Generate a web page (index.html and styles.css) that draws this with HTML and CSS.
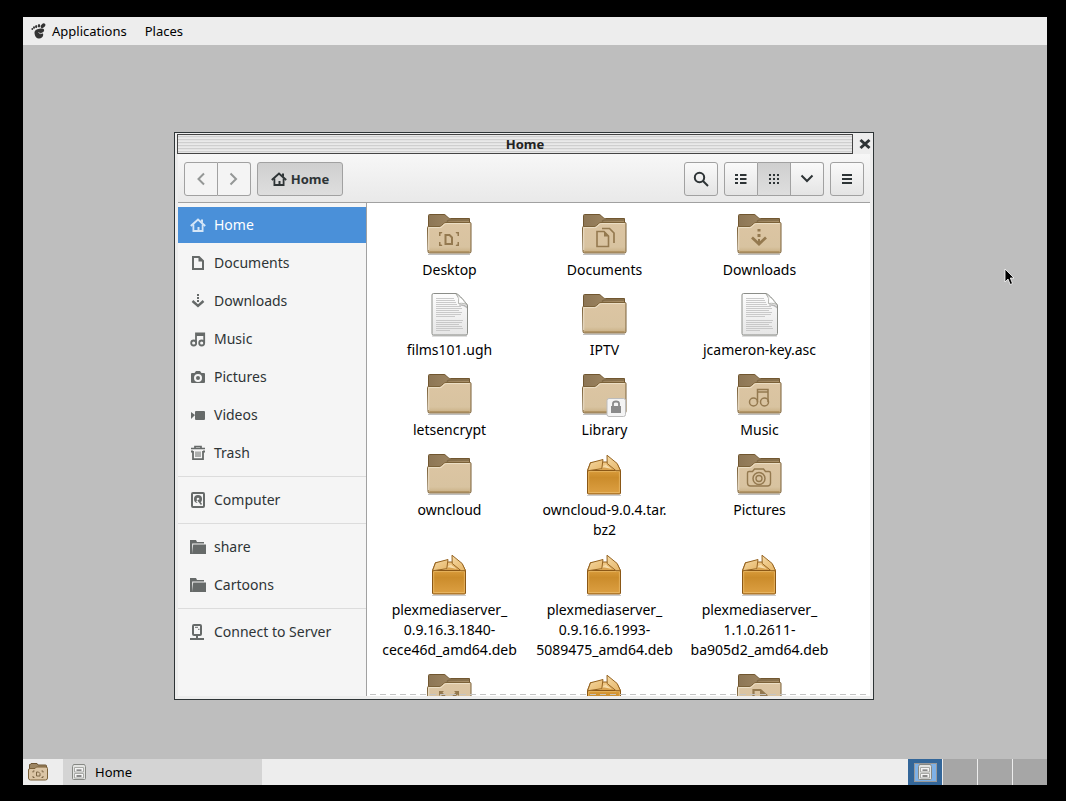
FILE: index.html
```
<!DOCTYPE html>
<html lang="en">
<head>
  <meta charset="UTF-8"/>
  <meta name="viewport" content="width=device-width, initial-scale=1"/>
  <title>Home</title>
  <link rel="stylesheet" href="styles.css">
</head>
<body>
  <svg class="defs" aria-hidden="true">
    <defs>
      <linearGradient id="tan" x1="0" y1="0" x2="0" y2="1"><stop offset="0" stop-color="#dcc5a3"/><stop offset=".8" stop-color="#d8c3a0"/><stop offset="1" stop-color="#c8ae82"/></linearGradient>
      <linearGradient id="brown" x1="0" y1="0" x2="1" y2="0"><stop offset="0" stop-color="#8d7655"/><stop offset="1" stop-color="#a88f69"/></linearGradient>
      <linearGradient id="paper" x1="0" y1="0" x2="0" y2="1"><stop offset="0" stop-color="#fdfdfd"/><stop offset="1" stop-color="#e6e6e6"/></linearGradient>
      <linearGradient id="boxfront" x1="0" y1="0" x2="0" y2="1"><stop offset="0" stop-color="#d89b3a"/><stop offset=".3" stop-color="#cb8c2b"/><stop offset="1" stop-color="#dda043"/></linearGradient>
      <linearGradient id="flap" x1="0" y1="0" x2="1" y2="1"><stop offset="0" stop-color="#f5d9a5"/><stop offset="1" stop-color="#e6b566"/></linearGradient>
    </defs>
    <symbol id="folder" viewBox="0 0 48 48">
      <path d="M3 44.5h42" stroke="#000" stroke-opacity=".25"/>
      <path d="M3.500 18V5.500q0-1 1-1h14.500q1 0 1.800.8l2.700 2.700q.8.500 1.800.5h19.200v12z" fill="url(#brown)" stroke="#715730"/>
      <path d="M22 11.500q1-1.500 3-1.500h19" fill="none" stroke="#7f6845" stroke-width="1.500"/>
      <path d="M2.500 17.500q0-1 1-1h10.500q1.500 0 2.500-1l2-2q1-1 2.500-1h24q1 0 1 1v28q0 1.500-1.500 1.500H4.500q-1.500 0-1.500-1.500z" fill="url(#tan)" stroke="#7b6138"/>
      <path d="M3.700 40V17.600h11q1.500 0 2.500-1l2-2q1-1 2.300-1h23.200" fill="none" stroke="#ede0c9"/>
      <path d="M4.500 41.700h40" stroke="#ae915f"/>
    </symbol>
    <symbol id="text-file" viewBox="0 0 48 48">
      <path d="M7 46h35" stroke="#000" stroke-opacity=".25"/>
      <path d="M8.500 3.500h22.500q3 .5 11.500 11.500v28.500q0 1.500-1.500 1.500H8.500q-1.500 0-1.500-1.500V5q0-1.500 1.500-1.500z" fill="url(#paper)" stroke="#8b8d88"/>
      <path d="M11 8.500h18M11 10.500h19M11 12.500h20M11 14.500h21M11 16.500h25M11 18.500h26M11 20.500h23M11 22.500h26M11 24.500h25M11 26.500h19M11 30.500h27M11 32.500h26M11 34.500h23M11 36.500h26M11 38.500h27M11 40.500h14" stroke="#c4c4c4" stroke-width=".9"/>
      <path d="M34 14.500q5-1 8 2l-.2 2q-2-3-7.800-3z" fill="#777" opacity=".5"/>
      <path d="M31 4q4 4 2.500 9.500Q40 12.500 42.200 15.500 38 8 31 4z" fill="#fff" stroke="#a4a6a1" stroke-width=".8"/>
    </symbol>
    <symbol id="package" viewBox="0 0 48 48">
      <path d="M7 45.500h34" stroke="#000" stroke-opacity=".2"/>
      <path d="M7.500 20.500l3-8L22 12h6l9 2 3.500 6.500z" fill="#efc683" stroke="#966421"/>
      <path d="M20 20.500l7-6 8 6z" fill="#d9a24f"/><path d="M22 17l4-2.500 6 4.500-5-1z" fill="#f6dba8"/>
      <path d="M7.500 20.500h33v22.500q0 1-1 1h-31q-1 0-1-1z" fill="url(#boxfront)" stroke="#8a5716"/>
      <path d="M8.700 42.500V21.600h30.700v20.900z" fill="none" stroke="#edbd6e" stroke-opacity=".7"/>
      <path d="M7.500 20.800l3-8L23 9.500l-1.200 9.200z" fill="url(#flap)" stroke="#966421"/>
      <path d="M27 5.200l10.200 8.300 3.300 7.200H36l-8.800-7.200z" fill="url(#flap)" stroke="#966421"/>
    </symbol>
    <symbol id="cabinet" viewBox="0 0 16 16">
      <path d="M2.500.5h11l1 2v12q0 1-1 1h-11q-1 0-1-1v-12z" fill="#e3e4e2" stroke="#868884"/>
      <path d="M3.500 3.500h9v4.500h-9zM3.500 9.500h9V14h-9z" fill="#f5f5f5" stroke="#a9aaa7"/>
      <path d="M5.500 6.200h5M5.500 12h5" stroke="#666" stroke-width="1.300"/>
    </symbol>
    <symbol id="e-desktop" viewBox="0 0 48 48">
      <path d="M14 22h3.500l-1 1.500H15.500V26H14zM14 36h3.500l-1-1.500H15.500V32H14zM34 22h-3.500l1 1.500h1V26H34zM34 36h-3.500l1-1.500h1V32H34z" stroke="none"/>
      <path d="M20.500 25h4l2.500 2.500v6.500h-6.500z" fill="none" stroke-width="2"/>
    </symbol>
    <symbol id="e-documents" viewBox="0 0 48 48">
      <path d="M17 21.500h7l4.500 4.500v10.500H17z" fill="none" stroke-width="1.600"/><path d="M24 21v5.500h5z" stroke="none"/>
      <path d="M22 18.500h7.500l4.500 4.500v10" fill="none" stroke-width="1.700"/>
    </symbol>
    <symbol id="e-downloads" viewBox="0 0 48 48">
      <path d="M22.500 19h3v2.500h-3zM22.500 24h3v3h-3z" stroke="none"/>
      <path d="M17 27.500l7 6.500 7-6.500" fill="none" stroke-width="2.800"/><path d="M24 29v4" stroke-width="2" fill="none"/>
    </symbol>
    <symbol id="e-music" viewBox="0 0 48 48">
      <path d="M22.500 32V19.500h10.500V32M22.500 22h10.500" fill="none" stroke-width="1.500"/><circle cx="18.500" cy="32" r="4" fill="none" stroke-width="1.500"/><circle cx="29.500" cy="32" r="4" fill="none" stroke-width="1.500"/>
    </symbol>
    <symbol id="e-pictures" viewBox="0 0 48 48">
      <path d="M12.500 23q0-1.500 1.500-1.500h3.500l2-2.500h9l2 2.500H34q1.500 0 1.500 1.500v10q0 3-3 3h-17q-3 0-3-3z" fill="none" stroke-width="1.400"/><circle cx="24" cy="28.500" r="6" fill="none" stroke-width="1.500"/><circle cx="24" cy="28.500" r="3" fill="none" stroke-width="1.400"/>
    </symbol>
    <symbol id="e-public" viewBox="0 0 48 48">
      <path d="M14 21h5l-1.500 1.500 3 3-2 2-3-3L14 26zM34 21h-5l1.500 1.500-3 3 2 2 3-3L34 26z" stroke="none"/>
    </symbol>
    <symbol id="e-templates" viewBox="0 0 48 48">
      <path d="M18.500 36V20h7l6 5.500V36z" fill="none" stroke-width="2.200"/><path d="M25 20v6h7z" stroke="none"/>
    </symbol>
    <symbol id="home" viewBox="0 0 16 16">
      <path d="M.8 9L8 2.500 15.200 9" fill="none" stroke="currentColor" stroke-width="2"/>
      <path d="M3.400 7.500V14h9.200V7.500" fill="none" stroke="currentColor" stroke-width="1.800"/><path d="M11 2.500h2V6l-2-1.500z"/><path d="M7.500 14.500V10h2v4.500z"/>
    </symbol>
    <symbol id="document" viewBox="0 0 16 16">
      <path d="M3 2h6l4 4v8H3z" fill="none" stroke="currentColor" stroke-width="2"/><path d="M8.500 1.500v5h5z"/>
    </symbol>
    <symbol id="download" viewBox="0 0 16 16">
      <path d="M7 1h2v2H7zM7 4h2v2H7zM7 7h2v2H7z"/><path d="M2.500 8L8 13l5.500-5" fill="none" stroke="currentColor" stroke-width="2.400"/>
    </symbol>
    <symbol id="music" viewBox="0 0 16 16">
      <path d="M6 12V2.500h8.200V12M6 4h8" fill="none" stroke="currentColor" stroke-width="1.800"/><circle cx="3.700" cy="12" r="2.500" fill="none" stroke="currentColor" stroke-width="1.800"/><circle cx="11.700" cy="12" r="2.500" fill="none" stroke="currentColor" stroke-width="1.800"/>
    </symbol>
    <symbol id="camera" viewBox="0 0 16 16">
      <path fill-rule="evenodd" d="M2 4h2.500L6 2h4l1.500 2H14q1 0 1 1v8q0 1-1 1H2q-1 0-1-1V5q0-1 1-1zm6 1a4 4 0 1 0 0 8 4 4 0 0 0 0-8zm0 2a2 2 0 1 1 0 4 2 2 0 0 1 0-4z"/>
    </symbol>
    <symbol id="video" viewBox="0 0 16 16">
      <path d="M1 5l4 3-4 4zM6 4h8q1 0 1 1v7q0 1-1 1H6q-1 0-1-1V5q0-1 1-1z"/>
    </symbol>
    <symbol id="trash" viewBox="0 0 16 16">
      <path d="M1 3.500h14M5 3V1.500h6V3" fill="none" stroke="currentColor" stroke-width="1.700"/><path d="M3 6v8.200h10V6M1 6.500h2M13 6.500h2" fill="none" stroke="currentColor" stroke-width="1.800"/><path d="M6 6.500V12M8 6.500V12M10 6.500V12" stroke="currentColor" stroke-width="1"/>
    </symbol>
    <symbol id="disk" viewBox="0 0 16 16">
      <rect x="2" y="1" width="12" height="14" rx="1" fill="none" stroke="currentColor" stroke-width="2"/><circle cx="8" cy="7" r="4"/><circle cx="8" cy="7" r="1.300" fill="#f5f5f5"/><path d="M7 8.500l4 4.500" stroke="#f5f5f5" stroke-width="2.500"/><path d="M8 8l3.500 4.500" stroke="currentColor" stroke-width="1.500"/>
    </symbol>
    <symbol id="dir" viewBox="0 0 16 16">
      <path d="M0 1h6l1 2h7v1.500H2.200V15H0z"/><path d="M3.200 5.500H16V15H2z"/>
    </symbol>
    <symbol id="server" viewBox="0 0 16 16">
      <rect x="3" y="1" width="8" height="10" rx="1" fill="none" stroke="currentColor" stroke-width="2"/><path d="M5 3.300h3M8 5.300h1.500" stroke="currentColor"/><path d="M6 11h2v3H6zM0 14h14v2H0z"/>
    </symbol>
  </svg>

  <header class="panel top-panel">
    <button class="menu"><svg class="foot" viewBox="0 0 16 16" aria-hidden="true">
      <path d="M9.500 5.500c3.500-.6 4.500 1.500 3 3.300-1 1.200-2.500 1-3.500.8 2 .5 3.500.5 3.200 2.500-.3 2.300-2.300 3.700-4.700 3.400C4.500 15 3.500 11.800 3.500 9.500c0-2.500 3-3.600 6-4z"/>
      <path d="M7.500 9.500q1.500 1.800 4 .8" fill="none" stroke="#ededed" stroke-width=".8"/>
      <ellipse cx="11.800" cy="2.700" rx="2.700" ry="1.800" transform="rotate(-45 12 2.500)"/><ellipse cx="8" cy="2.700" rx="1.200" ry="1.700"/><ellipse cx="5.200" cy="3.500" rx="1.100" ry="1.500"/><ellipse cx="3" cy="4.500" rx="1" ry="1.200"/><ellipse cx="1.300" cy="6" rx=".9" ry="1"/>
    </svg>Applications</button>
    <button class="menu">Places</button>
  </header>

  <main class="desktop">
    <section class="window" aria-label="Home">
      <div class="titlebar">
        <h1 class="title">Home</h1>
        <button class="close" aria-label="Close"><svg viewBox="0 0 12 12"><path d="M1.500 2l9 8M10.500 2l-9 8" stroke="#2e3436" stroke-width="3"/></svg></button>
      </div>
      <div class="toolbar">
        <div class="group">
          <button class="btn dim" aria-label="Back"><svg viewBox="0 0 16 16"><path d="M11 2.500L5.500 8l5.500 5.500"/></svg></button>
          <button class="btn dim" aria-label="Forward"><svg viewBox="0 0 16 16"><path d="M4.500 2.500L10 8l-5.500 5.500"/></svg></button>
        </div>
        <button class="btn path"><svg class="icon"><use href="#home"/></svg>Home</button>
        <div class="spacer"></div>
        <button class="btn" aria-label="Search"><svg viewBox="0 0 16 16"><circle cx="6.500" cy="6.500" r="4.700"/><path d="M10 10l5 5"/></svg></button>
        <div class="group">
          <button class="btn" aria-label="List view"><svg viewBox="0 0 16 16"><path d="M2 4h3M7 4h6.500M2 8h3M7 8h6.500M2 12h3M7 12h6.500"/></svg></button>
          <button class="btn active" aria-label="Icon view"><svg viewBox="0 0 16 16"><path d="M3 4h2M7 4h2M11 4h2M3 8h2M7 8h2M11 8h2M3 12h2M7 12h2M11 12h2"/></svg></button>
          <button class="btn" aria-label="View options"><svg viewBox="0 0 16 16"><path d="M2.500 4.500L8 10 13.500 4.500"/></svg></button>
        </div>
        <button class="btn" aria-label="Menu"><svg viewBox="0 0 16 16"><path d="M3 4h10M3 8h10M3 12h10"/></svg></button>
      </div>
      <div class="content">
        <nav class="sidebar">
          <a class="place selected" href="#"><svg class="icon"><use href="#home"/></svg>Home</a>
          <a class="place" href="#"><svg class="icon"><use href="#document"/></svg>Documents</a>
          <a class="place" href="#"><svg class="icon"><use href="#download"/></svg>Downloads</a>
          <a class="place" href="#"><svg class="icon"><use href="#music"/></svg>Music</a>
          <a class="place" href="#"><svg class="icon"><use href="#camera"/></svg>Pictures</a>
          <a class="place" href="#"><svg class="icon"><use href="#video"/></svg>Videos</a>
          <a class="place" href="#"><svg class="icon"><use href="#trash"/></svg>Trash</a>
          <hr>
          <a class="place" href="#"><svg class="icon"><use href="#disk"/></svg>Computer</a>
          <hr>
          <a class="place" href="#"><svg class="icon"><use href="#dir"/></svg>share</a>
          <a class="place" href="#"><svg class="icon"><use href="#dir"/></svg>Cartoons</a>
          <hr>
          <a class="place" href="#"><svg class="icon"><use href="#server"/></svg>Connect to Server</a>
        </nav>
        <div class="files">
          <a class="file" href="#"><svg><use href="#folder"/><use class="emblem" href="#e-desktop"/></svg>Desktop</a>
          <a class="file" href="#"><svg><use href="#folder"/><use class="emblem" href="#e-documents"/></svg>Documents</a>
          <a class="file" href="#"><svg><use href="#folder"/><use class="emblem" href="#e-downloads"/></svg>Downloads</a>
          <a class="file" href="#"><svg><use href="#text-file"/></svg>films101.ugh</a>
          <a class="file" href="#"><svg><use href="#folder"/></svg>IPTV</a>
          <a class="file" href="#"><svg><use href="#text-file"/></svg>jcameron-key.asc</a>
          <a class="file" href="#"><svg><use href="#folder"/></svg>letsencrypt</a>
          <a class="file" href="#"><svg viewBox="0 0 48 48"><use href="#folder"/>
            <rect x="27" y="28.500" width="18.500" height="18" rx="2" fill="#f4f4f4" stroke="#bcbcbc"/>
            <path d="M31 36h10v7H31z" fill="#8a8a8a"/><path d="M33 36v-2.500q0-2 3-2t3 2V36" fill="none" stroke="#8a8a8a" stroke-width="1.800"/></svg>Library</a>
          <a class="file" href="#"><svg><use href="#folder"/><use class="emblem" href="#e-music"/></svg>Music</a>
          <a class="file" href="#"><svg><use href="#folder"/></svg>owncloud</a>
          <a class="file" href="#"><svg><use href="#package"/></svg>owncloud-9.0.4.tar.<br>bz2</a>
          <a class="file" href="#"><svg><use href="#folder"/><use class="emblem" href="#e-pictures"/></svg>Pictures</a>
          <a class="file" href="#"><svg><use href="#package"/></svg>plexmediaserver_<br>0.9.16.3.1840-<br>cece46d_amd64.deb</a>
          <a class="file" href="#"><svg><use href="#package"/></svg>plexmediaserver_<br>0.9.16.6.1993-<br>5089475_amd64.deb</a>
          <a class="file" href="#"><svg><use href="#package"/></svg>plexmediaserver_<br>1.1.0.2611-<br>ba905d2_amd64.deb</a>
          <a class="file" href="#" aria-label="Public"><svg><use href="#folder"/><use class="emblem" href="#e-public"/></svg></a>
          <a class="file" href="#" aria-label="Package"><svg><use href="#package"/></svg></a>
          <a class="file" href="#" aria-label="Templates"><svg><use href="#folder"/><use class="emblem" href="#e-templates"/></svg></a>
        </div>
      </div>
    </section>
  </main>

  <footer class="panel bottom-panel">
    <button class="launcher" aria-label="Show desktop"><svg viewBox="0 0 20 20">
      <path d="M1.500 8V2.500h1L3 1.500h6l1 1.500h7.500q1 0 1 1v5z" fill="#9d8663" stroke="#6c5433"/>
      <path d="M.5 8q0-1.500 1.500-1.500h5L8.500 5H18q1.500 0 1.500 1.500V16q0 2-2 2h-15q-2 0-2-2z" fill="#dbc5a5" stroke="#7b6138"/>
      <path d="M5 10.500V9h1.500M5 14v1.500h1.500M15 10.500V9h-1.500M15 14v1.500h-1.500M8.500 10h2l1.500 1.500V14H8.500z" fill="none" stroke="#7b6544"/>
    </svg></button>
    <button class="task"><svg><use href="#cabinet"/></svg>Home</button>
    <div class="spacer"></div>
    <div class="workspaces">
      <button class="workspace current" aria-label="Workspace 1"><span class="mini"><svg><use href="#cabinet"/></svg></span></button>
      <button class="workspace" aria-label="Workspace 2"></button>
      <button class="workspace" aria-label="Workspace 3"></button>
      <button class="workspace" aria-label="Workspace 4"></button>
    </div>
  </footer>

  <svg class="cursor" viewBox="0 0 12 18" aria-hidden="true"><path d="M1 1v13l3-3 2.200 5.500 2.300-1L6.300 10H10z" fill="#000" stroke="#fff" stroke-width=".8"/></svg>
</body>
</html>
```
FILE: styles.css
```
* {box-sizing:border-box;}
body {margin:0;padding:17px 19px 16px 23px;min-height:100vh;background:#000;font-family:"Noto Sans","Open Sans",sans-serif;font-size:13px;line-height:20px;color:#000;display:flex;flex-direction:column;}
button {font:inherit;color:inherit;border:0;padding:0;margin:0;background:none;}
a {color:inherit;text-decoration:none;}
svg {display:block;flex:none;}
.defs {position:absolute;width:0;height:0;}
.spacer {flex:1;}
.icon {width:16px;height:16px;fill:currentColor;}

/* panels */
.panel {background:#ededed;display:flex;}
.top-panel {height:28px;padding-left:8px;gap:18px;}
.menu {display:flex;align-items:center;gap:5px;}
.foot {width:16px;height:16px;fill:#333;}
.bottom-panel {height:26px;}
.launcher {width:40px;padding-left:5px;}
.launcher svg {width:20px;height:20px;}
.task {width:199px;background:#d4d4d4;display:flex;align-items:center;gap:8px;padding-left:8px;}
.task svg {width:16px;height:16px;}
.workspaces {display:flex;gap:1px;}
.workspace {width:34px;background:#a6a6a6;display:flex;align-items:center;justify-content:center;}
.workspace.current {background:#336699;}
.mini {width:23px;height:19px;border:1px solid #999;background:#7fb1e6;display:flex;align-items:center;justify-content:center;}
.mini svg {width:16px;height:16px;}

/* desktop and window */
.desktop {flex:1;background:#bebebe;position:relative;}
.window {position:absolute;left:151px;top:87px;width:700px;height:568px;border:1px solid #2e3436;background:#ededed;padding:1px 3px 3px;display:flex;flex-direction:column;}
.titlebar {display:flex;height:20px;margin:0 -1px;}
.title {flex:1;margin:0;border:1px solid #444;background:repeating-linear-gradient(#eaeaea 0,#eaeaea 1px,#cfcfcf 1px,#cfcfcf 2px,#e4e4e4 2px,#e4e4e4 3px);font-size:13px;line-height:18px;text-align:center;color:#222;padding-left:20px;}
.close {width:18px;display:flex;align-items:center;justify-content:flex-end;}
.close svg {width:12px;height:12px;}
.toolbar {display:flex;gap:6px;padding:8px 6px 6px;background:linear-gradient(#f7f7f7,#e9e9e9);border-bottom:1px solid #a1a1a1;}
.group {display:flex;}
.group .btn {border-radius:0;}
.group .btn:first-child {border-radius:3px 0 0 3px;}
.group .btn:last-child {border-radius:0 3px 3px 0;}
.group .btn + .btn {border-left:0;width:33px;}
.btn {width:34px;height:34px;border:1px solid #a1a1a1;border-radius:3px;background:linear-gradient(#fafafa,#e4e4e4);color:#2e3436;display:flex;align-items:center;justify-content:center;}
.btn svg:not(.icon) {width:16px;height:16px;fill:none;stroke:#2e3436;stroke-width:2;}
.btn.dim {background:#f4f4f4;}
.btn.dim svg:not(.icon) {stroke:#949796;}
.btn.active,.btn.path {background:linear-gradient(#cfcfcf,#dedede);}
.btn.path {width:86px;gap:4px;font-weight:bold;line-height:18px;}
.content {flex:1;min-height:0;display:flex;font-size:14px;}

/* places */
.sidebar {width:189px;padding-top:4px;background:#f5f5f5;border-right:1px solid #a1a1a1;color:#2e3436;}
.place {display:flex;align-items:center;gap:8px;height:36px;margin-bottom:2px;padding-left:12px;}
.place .icon {color:#666a69;}
.place.selected {background:#4a90d9;color:#fff;}
.place.selected .icon {color:#d5e6f7;}
.sidebar hr {height:1px;border:0;margin:5px 0;background:#dcdcdc;}

/* icon view */
.files {flex:1;position:relative;overflow:hidden;background:#fff;display:grid;grid-template-columns:repeat(3,155px);align-content:start;row-gap:10px;padding:7px 5px 0;}
.files::after {content:"";position:absolute;left:3px;right:0;bottom:1px;height:1px;background:repeating-linear-gradient(90deg,#c4c4c4 0,#c4c4c4 6px,transparent 6px,transparent 10px);}
.file {text-align:center;}
.file svg {width:48px;height:48px;margin:0 54px 2px 53px;}
.emblem {fill:#94794f;stroke:#94794f;}

.cursor {position:absolute;left:1004px;top:268px;width:12px;height:18px;}
```
